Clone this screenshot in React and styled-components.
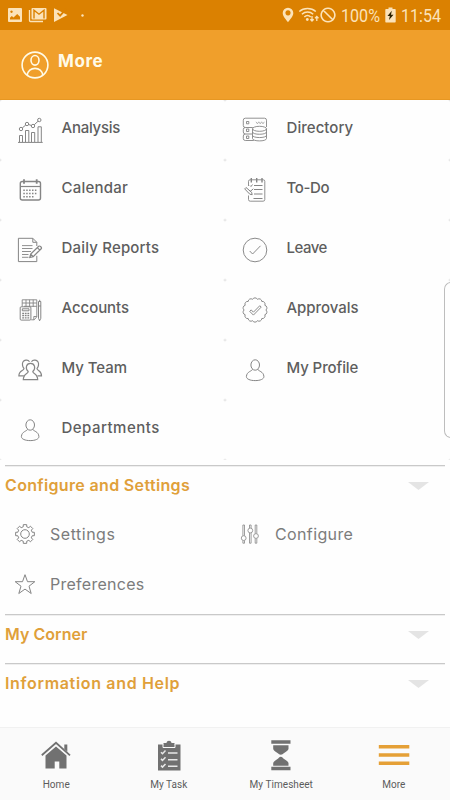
import React from 'react';
import styled, { createGlobalStyle } from 'styled-components';

const GlobalStyle = createGlobalStyle`
  * { box-sizing: border-box; }
  body { margin: 0; background: #fdfdfd; overflow: hidden; }
`;

const Screen = styled.div`
  position: relative;
  display: flex;
  flex-direction: column;
  width: 450px;
  height: 800px;
  background: #fefefe;
  font-family: Inter, sans-serif;
`;

const StatusBar = styled.div`
  display: flex;
  justify-content: space-between;
  height: 30px;
  padding: 0 9px 0 7px;
  background: #db8101;
  color: #fce3b9;
`;

const StatusGroup = styled.div`
  display: flex;
  align-items: center;
`;

const StatusIcon = styled.svg`
  display: block;
  flex: none;
  margin-left: ${(p) => p.$gap || 0}px;
`;

const StatusText = styled.span`
  width: ${(p) => p.$width}px;
  margin-left: ${(p) => p.$gap}px;
  padding-top: 1px;
  font: 400 18px/30px Roboto, sans-serif;
  white-space: nowrap;
  transform: scaleX(0.895);
  transform-origin: left center;
`;

const Header = styled.header`
  display: flex;
  height: 70px;
  padding: 21px 21px 0;
  background: #f09f2b;
  border-bottom: 1px solid #e79722;
  color: #fffbe8;
`;

const Title = styled.h1`
  margin: 0 0 0 9px;
  font-size: 17px;
  font-weight: 700;
  line-height: 21px;
  letter-spacing: 0.6px;
`;

const TileGrid = styled.div`
  display: grid;
  grid-template-columns: 1fr 1fr;
  grid-auto-rows: 60px;
  background: #e4e4e4;
`;

const Tile = styled.div`
  display: flex;
  padding: 17px 0 0 17px;
  border-radius: 2.5px;
  background: #fefefe;
  color: #858585;
`;

const TileLabel = styled.span`
  margin-left: 18.5px;
  color: #5e5e5e;
  font-size: 15px;
  font-weight: 500;
  line-height: 21px;
  letter-spacing: ${(p) => p.$track}px;
`;

const Section = styled.section`
  height: ${(p) => p.$height}px;
`;

const Sections = styled.div`
  padding-top: 5px;
`;

const SectionHead = styled.div`
  display: flex;
  align-items: center;
  justify-content: space-between;
  height: 41px;
  margin: 0 5px;
  padding-right: 16px;
  border-top: 1px solid #c9c9c9;
  box-shadow: inset 0 1px #efefef;
`;

const SectionTitle = styled.h2`
  margin: 0 0 2px;
  color: #e0a03a;
  font-size: 16px;
  font-weight: 600;
  letter-spacing: ${(p) => p.$track}px;
`;

const Arrow = styled.svg`
  display: block;
`;

const OptionGrid = styled.div`
  display: grid;
  grid-template-columns: 1fr 1fr;
  grid-auto-rows: 50px;
  padding-top: 3px;
`;

const Option = styled.div`
  display: flex;
  align-items: center;
  padding-left: 14px;
  color: #858585;
`;

const OptionLabel = styled.span`
  margin-left: 14px;
  color: #7c7c7c;
  font-size: 16px;
  font-weight: 400;
  letter-spacing: ${(p) => p.$track}px;
`;

const EdgePanel = styled.div`
  position: absolute;
  top: 282px;
  right: -1px;
  width: 7px;
  height: 156px;
  border: 1px solid #bdbdbd;
  border-right: 0;
  border-radius: 7px 0 0 7px;
  background: #fefefe;
`;

const BottomNav = styled.nav`
  display: grid;
  grid-template-columns: repeat(4, 1fr);
  height: 73px;
  margin-top: auto;
  border-top: 1px solid #f1f1f1;
  background: #fafafa;
`;

const NavItem = styled.div`
  display: flex;
  flex-direction: column;
  align-items: center;
  padding-top: 12px;
  color: ${(p) => (p.$active ? '#e5a036' : '#717171')};
`;

const NavLabel = styled.span`
  margin-top: 6px;
  color: #5c5c5c;
  font: 400 10px/15px Roboto, sans-serif;
  letter-spacing: 0.05px;
`;

const TileSvg = styled.svg`
  display: block;
  flex: none;
  width: 26px;
  height: 26px;
  fill: none;
  stroke: currentColor;
  stroke-width: 1;
`;

const OptionSvg = styled(TileSvg)`
  width: 22px;
  height: 22px;
`;

const scallop = (() => {
  const n = 14;
  let d = '';
  for (let i = 0; i <= n; i++) {
    const a = (i / n) * Math.PI * 2 - Math.PI / 2 - Math.PI / n;
    const x = (13 + 10.9 * Math.cos(a)).toFixed(2);
    const y = (13 + 10.9 * Math.sin(a)).toFixed(2);
    d += i ? `A2.7 2.7 0 0 1 ${x} ${y}` : `M${x} ${y}`;
  }
  return d + 'Z';
})();

const gear = (() => {
  const n = 8;
  const pts = [];
  for (let i = 0; i < n; i++) {
    const a = (i / n) * Math.PI * 2;
    [[-0.24, 7.4], [-0.18, 9.5], [0.18, 9.5], [0.24, 7.4]].forEach(([o, r]) => {
      pts.push(`${(11 + r * Math.cos(a + o)).toFixed(2)} ${(11 + r * Math.sin(a + o)).toFixed(2)}`);
    });
  }
  return `M${pts.join('L')}Z`;
})();

const icons = {
  analysis: (
    <>
      <path d="M1 25.4h24.7M2.5 25v-6.500h3V25M8.500 25V13.500h3.300V25M14.500 25v-9.500h3.200V25M21 25V9.800h3.300V25" />
      <circle cx="4" cy="12" r="1.7" />
      <circle cx="10" cy="7" r="1.7" />
      <circle cx="16" cy="9" r="1.7" />
      <circle cx="22.3" cy="3" r="1.7" />
      <path d="M5.300 10.900 8.700 8.100M11.600 7.500l2.800 1M17.200 7.800l3.900-3.600" />
    </>
  ),
  calendar: (
    <>
      <rect x="3.3" y="4.5" width="20.2" height="18.5" rx="2" strokeWidth="1.4" />
      <path d="M3.300 9.500h20.200" strokeWidth="1.2" />
      <path d="M7 2.300v4.500M19.700 2.300v4.500" strokeWidth="1.8" />
      <path d="M6.300 13.200h14.500M6.300 16.500h14.500M6.300 19.800h11.500" strokeWidth="1.5" strokeDasharray="1.5 1.4" />
    </>
  ),
  directory: (
    <g strokeWidth="0.9">
      <path d="M24.500 10V3.200a2 2 0 0 0-2-2H3.300a2 2 0 0 0-2 2v5.300a2 2 0 0 0 2 2h7.500M3.300 10.500a2 2 0 0 0-2 2V15a2 2 0 0 0 2 2h7M3.300 17a2 2 0 0 0-2 2v2.500a2 2 0 0 0 2 2h8.500" />
      <path d="M4.500 4.500h2.300v2.300H4.500zM4.500 12h2.300v2.500H4.500zM4.500 19h2.300v2.500H4.500z" />
      <path d="m14 4.800 1.400 2 1.400-2 1.400 2 1.400-2 1.400 2 1.300-2" strokeWidth="0.6" />
      <ellipse cx="17.5" cy="11.8" rx="7" ry="2.5" />
      <path d="M10.500 11.800v9.700c0 3.200 14 3.200 14 0v-9.700M10.500 15c0 3 14 3 14 0M10.500 18.300c0 3 14 3 14 0" />
    </g>
  ),
  todo: (
    <>
      <path d="M6.500 9V4.300a1.500 1.500 0 0 1 1.500-1.500h13.300a1.500 1.500 0 0 1 1.500 1.500v18.200a1.700 1.700 0 0 1-1.700 1.700H8.200a1.700 1.700 0 0 1-1.700-1.700v-4" strokeWidth="0.9" />
      <path d="M9.300 1v4.500M14.700 1v4.500M20 1v4.500" strokeWidth="1.4" />
      <path d="M12 8.500h8.500M12 12.500h8.500M12 17h8.500M11.500 21.500h9M8 8.500l1 1 1.500-2" />
      <path d="m4 10.500 5.600 4.800.6 2.400-2.400-.5-5.100-5.300zM7.800 14.800l3.500-3" />
    </>
  ),
  reports: (
    <>
      <path d="M19.800 9V5.300l-4-4H1.400v23.300h18.400v-5.800M15.800 1.300v4h4" />
      <path d="M5 8.600h10.500M5 11.500h10.500M5 14.500h9M5 17.500h6.500M5 20.300h6.500" strokeWidth="0.9" />
      <path d="m12.800 20.500.9-3.400 8-7.800c1.200-1 3.600 1.300 2.500 2.500l-8 7.800zM20.300 10.700l2.500 2.500M13.700 17.100l2.500 2.500" strokeWidth="1.2" />
    </>
  ),
  accounts: (
    <>
      <path d="M5.200 9.500V2.800h14.600v17l-2.600 3h-3M5.200 6h14.600M9 2.800v7M12.600 2.800v7M16.200 2.800v7M7 9.300h12.800M19.800 19.500h-3v3.300" strokeWidth="0.9" />
      <rect x="3.2" y="9.8" width="10.7" height="13.3" rx="1" />
      <path d="M5.300 11.800H12v2H5.300z" />
      <path d="M5.200 16.500h7M5.200 18.700h7M5.200 20.900h7" strokeWidth="1.3" strokeDasharray="1.8 .8" />
      <path d="M21.500 4.500h2.300v16.800l-1.200 2.500-1.100-2.500zM22.700 2.800v1.700M21.500 9h2.300" />
    </>
  ),
  leave: (
    <g strokeWidth="0.95">
      <circle cx="13" cy="13" r="11.8" />
      <path d="m7.700 14 2.900 3 7.900-8.200" />
    </g>
  ),
  approvals: (
    <g strokeWidth="0.95">
      <path d={scallop} />
      <path d="m7.700 14.300 1.500-1.400 2.200 2.300 6.400-6.500 1.400 1.400-7.800 8z" />
    </g>
  ),
  team: (
    <g strokeWidth="1.2">
      <path d="M12.500 4.700C11.300 2.600 9.700 3 8.800 3.100c-2.500.3-3.700 2.500-3.300 5 .2 1.800.8 2.700 1.500 3.400 0 2.500-5.100 1.500-5.100 7.300h5" />
      <path d="M14.500 4.700c1.200-2.100 2.800-1.700 3.700-1.600 2.500.3 3.700 2.500 3.300 5-.2 1.800-.8 2.700-1.500 3.400 0 2.500 4.500 1.500 4.500 7.300h-4" />
      <path d="M11.200 14.500c-3.200-3-2.200-8.200 2.300-8.200s5.500 5.200 2.300 8.200c0 2.400 4.700 1.500 4.900 8.100H6.300c.2-6.600 4.900-5.700 4.900-8.100Z" />
    </g>
  ),
  person: (
    <>
      <ellipse cx="13.2" cy="8" rx="4.3" ry="5.2" />
      <path d="M10.500 12.300c0 1.800-5.900 2-6.100 7.300 0 2.400 3.600 4 8.800 4s8.700-1.600 8.700-4c-.2-5.300-6-5.500-6-7.300" />
    </>
  ),
};

const optionIcons = {
  gear: (
    <>
      <path d={gear} strokeLinejoin="round" />
      <circle cx="11" cy="11" r="4.3" />
    </>
  ),
  sliders: (
    <g strokeWidth="0.8">
      <path d="M3.900 12.700V2h1.600v10.700M3.900 17.500v2.700h1.600v-2.700M10.500 5V2h1.600v3M10.500 10v10.200h1.600V10M16.200 10.500V2h1.600v8.500M16.200 15.500v4.700h1.600v-4.700" />
      <circle cx="4.7" cy="15.1" r="2.4" />
      <circle cx="11.3" cy="7.5" r="2.4" />
      <circle cx="17" cy="13" r="2.4" />
    </g>
  ),
  star: <path d="m11 1.700 2.500 7h7.300l-5.800 4.500 2.200 7.300-6.200-4.400-6.200 4.400L7 13.200 1.200 8.700h7.300z" />,
};

const tiles = [
  ['Analysis', 'analysis', -0.24],
  ['Directory', 'directory', 0.05],
  ['Calendar', 'calendar', 0.23],
  ['To-Do', 'todo', -0.35],
  ['Daily Reports', 'reports', 0.18],
  ['Leave', 'leave', -0.5],
  ['Accounts', 'accounts', -0.06],
  ['Approvals', 'approvals', -0.04],
  ['My Team', 'team', -0.06],
  ['My Profile', 'person', -0.1],
  ['Departments', 'person', 0.48],
];

const options = [
  ['Settings', 'gear', 0.52],
  ['Configure', 'sliders', 0.38],
  ['Preferences', 'star', 0.27],
];

const navItems = [
  {
    label: 'Home',
    icon: (
      <g fill="currentColor">
        <path d="M16 6.500 26.500 15.500V28.500h-7.200v-7h-4.600v7H5.500V15.500z" />
        <path d="M1.800 15.300 16 2.800l14 12.500" fill="none" stroke="#fafafa" strokeWidth="3.6" />
        <path d="M1.800 15.300 16 2.800l14 12.500" fill="none" stroke="currentColor" strokeWidth="1.8" />
        <path d="M24.300 4.500h3v7.200l-3-2.700z" />
      </g>
    ),
  },
  {
    label: 'My Task',
    icon: (
      <>
        <path fill="currentColor" d="M5 4.500h5.500V3h3c.3-3 4.700-3 5 0h3v1.500H27.500V30.500H5z" />
        <path d="M10 4v3.500h12V4" fill="none" stroke="#fafafa" strokeWidth="1" />
        <path d="m8 12.200 1.500 1.500 3-3.200M8 18.900l1.500 1.500 3-3.200M8 25.600l1.500 1.500 3-3.200M15 13h9.500M15 19.700h9.500M15 26.200h9.500" fill="none" stroke="#e8e8e8" strokeWidth="1.5" />
      </>
    ),
  },
  {
    label: 'My Timesheet',
    icon: (
      <>
        <path fill="currentColor" d="M8.200 5.200h15.300v3.500c0 1.500-2 2.700-4 4-1.700 1.100-2.300 2-3.700 2s-2-.9-3.700-2c-2-1.300-3.900-2.500-3.900-4zM8.200 25.700v-2.500c0-1.500 2-2.700 3.900-4 1.700-1.100 2.300-2.500 3.700-2.500s2 1.400 3.700 2.500c2 1.300 4 2.500 4 4v2.500z" />
        <path fill="currentColor" d="M6.300.3h19.200v3.500H6.300zM6.300 26.800h19.200v3.500H6.300z" />
      </>
    ),
  },
  {
    label: 'More',
    active: true,
    icon: <path fill="currentColor" d="M.8 5h30.500v3.500H.8zM.8 13.300h30.500v3.500H.8zM.8 21.500h30.500V25H.8z" />,
  },
];

function CollapsibleHead({ title, track }) {
  return (
    <SectionHead>
      <SectionTitle $track={track}>{title}</SectionTitle>
      <Arrow width="21" height="8" viewBox="0 0 21 8">
        <path d="M0 0h21L10.500 8z" fill="#e4e4e4" />
      </Arrow>
    </SectionHead>
  );
}

export default function App() {
  return (
    <Screen>
      <GlobalStyle />
      <StatusBar>
        <StatusGroup>
          <StatusIcon width="16" height="16" viewBox="0 0 16 16">
            <path fillRule="evenodd" fill="currentColor" d="M2 1h12a1 1 0 0 1 1 1v12a1 1 0 0 1-1 1H2a1 1 0 0 1-1-1V2a1 1 0 0 1 1-1zM3 12.500h10V9.800L10.200 7 6.500 10.600 4.800 9 3 10.800zM4.500 3.500a1.200 1.200 0 1 0 .01 0z" />
          </StatusIcon>
          <StatusIcon $gap={5} width="19" height="16" viewBox="0 0 19 16">
            <path d="M1.500 3v10.500a1 1 0 0 0 1 1H15" fill="none" stroke="currentColor" strokeWidth="1.3" />
            <path fill="currentColor" d="M4.500 1h13a1 1 0 0 1 1 1v9.500a1 1 0 0 1-1 1h-13a1 1 0 0 1-1-1V2a1 1 0 0 1 1-1z" />
            <path d="M6 11.500V3.200l5 4 5-4v8.300" fill="none" stroke="#db8101" strokeWidth="1.4" />
          </StatusIcon>
          <StatusIcon $gap={6} width="16" height="16" viewBox="0 0 16 16">
            <path fill="currentColor" d="M1 1.200 14.500 8 1 15z" />
            <path d="m4.500 6 2.600 2.700L13 2.200" fill="none" stroke="#db8101" strokeWidth="1.8" />
          </StatusIcon>
          <StatusIcon $gap={12} width="3" height="3" viewBox="0 0 3 3">
            <circle cx="1.5" cy="1.5" r="1.2" fill="currentColor" />
          </StatusIcon>
        </StatusGroup>
        <StatusGroup>
          <StatusIcon width="12" height="16" viewBox="0 0 12 16">
            <path fillRule="evenodd" fill="currentColor" d="M6 .7a5.300 5.300 0 0 1 5.300 5.300c0 3.500-3.500 6.500-5.300 9.300C4.200 12.500.7 9.500.7 6A5.300 5.300 0 0 1 6 .7zM6 3.300a2.600 2.600 0 1 0 .01 0z" />
          </StatusIcon>
          <StatusIcon $gap={4} width="22" height="16" viewBox="0 0 22 16">
            <g fill="none" stroke="currentColor" strokeWidth="1.5">
              <path d="M1.300 4.500c4.500-4 12-4 16.500 0M3.900 7.300c3.300-3 8-3 11.300 0M6.300 10c2-1.800 4.500-1.800 6.400 0" />
              <path d="M14 9v5M12.300 12.300 14 14l1.700-1.700M18.800 14V9.500M17.100 11.200l1.700-1.700 1.700 1.700" strokeWidth="1.3" />
            </g>
            <circle cx="9.3" cy="12.5" r="1.4" fill="currentColor" />
          </StatusIcon>
          <StatusIcon width="16" height="16" viewBox="0 0 16 16">
            <path d="M8 1.200a6.800 6.800 0 1 0 .01 0zM3.200 3.200l9.600 9.600" fill="none" stroke="currentColor" strokeWidth="1.6" />
          </StatusIcon>
          <StatusText $gap={5} $width={40}>100%</StatusText>
          <StatusIcon $gap={4} width="11" height="16" viewBox="0 0 11 16">
            <path fill="currentColor" d="M3.500.5h4V2H10a.7.7 0 0 1 .7.700v12.100a.7.7 0 0 1-.7.700H1a.7.7 0 0 1-.7-.7V2.700A.7.700 0 0 1 1 2h2.500z" />
            <path fill="#2c2100" d="M6.800 3.800 2.500 9h2.300L4 13l4.500-5.200H6z" />
          </StatusIcon>
          <StatusText $gap={5} $width={40}>11:54</StatusText>
        </StatusGroup>
      </StatusBar>

      <Header>
        <svg width="28" height="28" viewBox="0 0 28 28" fill="none" stroke="currentColor" strokeWidth="1.6">
          <circle cx="14" cy="14" r="12.9" />
          <ellipse cx="14" cy="9.3" rx="4" ry="4.8" />
          <path d="M6.300 24.300c.3-9.300 15.100-9.300 15.400 0" />
        </svg>
        <Title>More</Title>
      </Header>

      <TileGrid>
        {tiles.map(([label, icon, track]) => (
          <Tile key={label}>
            <TileSvg viewBox="0 0 26 26">{icons[icon]}</TileSvg>
            <TileLabel $track={track}>{label}</TileLabel>
          </Tile>
        ))}
        <Tile />
      </TileGrid>

      <Sections>
        <Section $height={149}>
          <CollapsibleHead title="Configure and Settings" track={0.34} />
          <OptionGrid>
            {options.map(([label, icon, track]) => (
              <Option key={label}>
                <OptionSvg viewBox="0 0 22 22">{optionIcons[icon]}</OptionSvg>
                <OptionLabel $track={track}>{label}</OptionLabel>
              </Option>
            ))}
          </OptionGrid>
        </Section>
        <Section $height={49}>
          <CollapsibleHead title="My Corner" track={0.05} />
        </Section>
        <Section $height={49}>
          <CollapsibleHead title="Information and Help" track={0.67} />
        </Section>
      </Sections>

      <BottomNav>
        {navItems.map(({ label, icon, active }) => (
          <NavItem key={label} $active={active}>
            <svg width="32" height="31" viewBox="0 0 32 31">{icon}</svg>
            <NavLabel>{label}</NavLabel>
          </NavItem>
        ))}
      </BottomNav>
      <EdgePanel />
    </Screen>
  );
}
